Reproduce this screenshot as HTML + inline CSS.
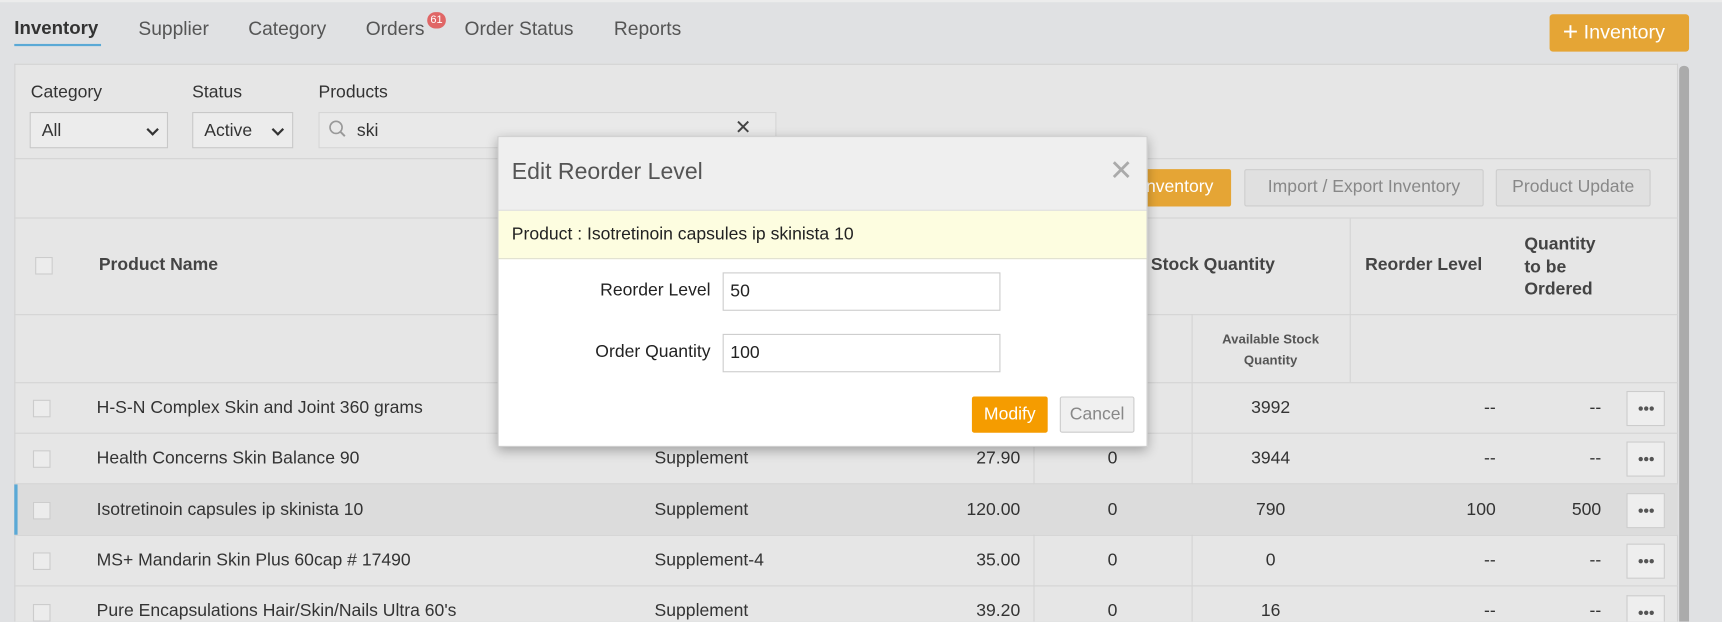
<!DOCTYPE html>
<html><head><meta charset="utf-8"><style>
*{box-sizing:border-box;margin:0;padding:0}
html,body{width:1722px;height:622px;overflow:hidden;background:#e0e1e3;font-family:"Liberation Sans",sans-serif;color:#333}
#w{position:absolute;left:0;top:0;width:1568px;height:566px;overflow:hidden;transform:scale(1.09821);transform-origin:0 0}
.a{position:absolute;white-space:nowrap}
.tab{font-size:17.5px;color:#555;top:16px}
.panel{position:absolute;left:13px;top:58px;width:1515px;height:508px;background:#e6e6e6;border:1px solid #d2d2d2;border-bottom:0}
.hl{position:absolute;height:1px;background:#d4d4d4;left:13px;width:1515px}
.vl{position:absolute;width:1px;background:#d4d4d4}
.sel{position:absolute;height:33px;border:1px solid #c8c8c8;background:#ececec;font-size:16px;padding:8px 10px;color:#333}
.arr:after{content:"";position:absolute;right:9px;top:11px;width:6px;height:6px;border-right:2px solid #333;border-bottom:2px solid #333;transform:rotate(45deg)}
.btn{position:absolute;height:34px;border:1px solid #cdcdcd;background:#e0e0e0;color:#888;font-size:16px;text-align:center;line-height:32px;border-radius:2px}
.cb{position:absolute;width:16px;height:16px;border:1px solid #ccc;background:#ececec}
.r{font-size:16px;color:#333}
.dots{position:absolute;left:1481px;width:35px;height:32px;border:1px solid #ccc;background:#eee}
.dots:before{content:"";position:absolute;left:10px;top:13px;width:4px;height:4px;border-radius:2px;background:#555;box-shadow:5px 0 0 #555,10px 0 0 #555}
.b{font-weight:bold;color:#444;font-size:16px}
</style></head><body><div id="w">
<div class="a" style="left:0;top:0;width:1568px;height:2px;background:#ececec"></div>
<div class="a tab" style="left:13px;color:#333;font-weight:bold;font-size:17px">Inventory</div>
<div class="a" style="left:13px;top:40px;width:79px;height:2px;background:#5aa9d6"></div>
<div class="a tab" style="left:126px">Supplier</div>
<div class="a tab" style="left:226px">Category</div>
<div class="a tab" style="left:333px">Orders</div>
<div class="a" style="left:389px;top:11px;width:17px;height:15px;border-radius:8px;background:#e06666;color:#fff;font-size:10px;text-align:center;line-height:15px">61</div>
<div class="a tab" style="left:423px">Order Status</div>
<div class="a tab" style="left:559px">Reports</div>
<div class="a" style="left:1411px;top:13px;width:127px;height:34px;background:#e5a535;border-radius:3px;color:#fff;font-size:18px;line-height:33px;padding-left:12px"><span style="font-size:24px;vertical-align:-2px">+</span> Inventory</div>

<div class="panel"></div>
<div class="a" style="left:1529px;top:60px;width:9px;height:506px;background:#ababab;border-radius:4px 4px 0 0"></div>
<div class="a r" style="left:28px;top:76px">Category</div>
<div class="a r" style="left:175px;top:76px">Status</div>
<div class="a r" style="left:290px;top:76px">Products</div>
<div class="sel arr" style="left:27px;top:102px;width:126px">All</div>
<div class="sel arr" style="left:175px;top:102px;width:92px">Active</div>
<div class="sel" style="left:290px;top:102px;width:417px;padding-left:34px;background:#e9e9e9;border-color:#d6d6d6">ski</div>
<svg class="a" style="left:299px;top:109px" width="18" height="18"><circle cx="7" cy="7" r="5.5" fill="none" stroke="#999" stroke-width="1.5"/><path d="M11 11l4 4" stroke="#999" stroke-width="1.8"/></svg>
<div class="a" style="left:669px;top:106px;font-size:18px;color:#444">✕</div>
<div class="hl" style="top:144px"></div>
<div class="btn" style="left:990px;top:154px;width:131px;background:#e5a535;border-color:#e5a535;color:#fff">Add Inventory</div>
<div class="btn" style="left:1133px;top:154px;width:218px">Import / Export Inventory</div>
<div class="btn" style="left:1362px;top:154px;width:141px">Product Update</div>
<div class="hl" style="top:198px"></div>
<div class="cb" style="left:32px;top:234px"></div>
<div class="a b" style="left:90px;top:233px">Product Name</div>
<div class="a b" style="left:1048px;top:233px">Stock Quantity</div>
<div class="vl" style="left:1229px;top:198px;height:150px"></div>
<div class="a b" style="left:1243px;top:233px">Reorder Level</div>
<div class="a b" style="left:1388px;top:213px;line-height:20.5px">Quantity<br>to be<br>Ordered</div>
<div class="hl" style="top:286px"></div>
<div class="vl" style="left:941px;top:286px;height:280px"></div>
<div class="vl" style="left:1085px;top:286px;height:280px"></div>
<div class="a" style="left:1085px;top:300px;width:144px;text-align:center;font-size:12px;font-weight:bold;color:#555;line-height:19px;white-space:normal">Available Stock<br>Quantity</div>
<div class="a" style="left:1030px;top:300px;font-size:12px;font-weight:bold;color:#555">be</div>
<div class="hl" style="top:348px"></div>
<div class="hl" style="top:394px"></div>
<div class="a" style="left:14px;top:441px;width:1514px;height:46px;background:#dcdcdc"></div>
<div class="a" style="left:13px;top:441px;width:3px;height:46px;background:#5aa9d6"></div>
<div class="hl" style="top:440px"></div>
<div class="hl" style="top:487px"></div>
<div class="hl" style="top:533px"></div>

<div class="cb" style="left:30px;top:364px"></div><div class="a r" style="left:88px;top:363px">H-S-N Complex Skin and Joint 360 grams</div>
<div class="a r" style="left:1120px;top:363px;width:74px;text-align:center">3992</div><div class="a r" style="left:1300px;top:363px;width:62px;text-align:right">--</div><div class="a r" style="left:1400px;top:363px;width:58px;text-align:right">--</div><div class="dots" style="top:356px"></div>

<div class="cb" style="left:30px;top:410px"></div><div class="a r" style="left:88px;top:409px">Health Concerns Skin Balance 90</div><div class="a r" style="left:596px;top:409px">Supplement</div><div class="a r" style="left:829px;top:409px;width:100px;text-align:right">27.90</div><div class="a r" style="left:983px;top:409px;width:60px;text-align:center">0</div>
<div class="a r" style="left:1120px;top:409px;width:74px;text-align:center">3944</div><div class="a r" style="left:1300px;top:409px;width:62px;text-align:right">--</div><div class="a r" style="left:1400px;top:409px;width:58px;text-align:right">--</div><div class="dots" style="top:402px"></div>

<div class="cb" style="left:30px;top:457px"></div><div class="a r" style="left:88px;top:456px">Isotretinoin capsules ip skinista 10</div><div class="a r" style="left:596px;top:456px">Supplement</div><div class="a r" style="left:829px;top:456px;width:100px;text-align:right">120.00</div><div class="a r" style="left:983px;top:456px;width:60px;text-align:center">0</div>
<div class="a r" style="left:1120px;top:456px;width:74px;text-align:center">790</div><div class="a r" style="left:1300px;top:456px;width:62px;text-align:right">100</div><div class="a r" style="left:1400px;top:456px;width:58px;text-align:right">500</div><div class="dots" style="top:449px"></div>

<div class="cb" style="left:30px;top:503px"></div><div class="a r" style="left:88px;top:502px">MS+ Mandarin Skin Plus 60cap # 17490</div><div class="a r" style="left:596px;top:502px">Supplement-4</div><div class="a r" style="left:829px;top:502px;width:100px;text-align:right">35.00</div><div class="a r" style="left:983px;top:502px;width:60px;text-align:center">0</div>
<div class="a r" style="left:1120px;top:502px;width:74px;text-align:center">0</div><div class="a r" style="left:1300px;top:502px;width:62px;text-align:right">--</div><div class="a r" style="left:1400px;top:502px;width:58px;text-align:right">--</div><div class="dots" style="top:495px"></div>

<div class="cb" style="left:30px;top:550px"></div><div class="a r" style="left:88px;top:548px">Pure Encapsulations Hair/Skin/Nails Ultra 60's</div><div class="a r" style="left:596px;top:548px">Supplement</div><div class="a r" style="left:829px;top:548px;width:100px;text-align:right">39.20</div><div class="a r" style="left:983px;top:548px;width:60px;text-align:center">0</div>
<div class="a r" style="left:1120px;top:548px;width:74px;text-align:center">16</div><div class="a r" style="left:1300px;top:548px;width:62px;text-align:right">--</div><div class="a r" style="left:1400px;top:548px;width:58px;text-align:right">--</div><div class="dots" style="top:542px;height:24px;border-bottom:0"></div>

<div class="a" style="left:453px;top:124px;width:592px;height:283px;background:#fff;box-shadow:0 3px 10px rgba(0,0,0,.3);border:1px solid #ccc"></div>
<div class="a" style="left:454px;top:125px;width:590px;height:67px;background:#efefef;border-bottom:1px solid #ddd"></div>
<div class="a" style="left:466px;top:145px;font-size:21px;color:#555">Edit Reorder Level</div>
<div class="a" style="left:1010px;top:140px;font-size:26px;color:#aaa">✕</div>
<div class="a" style="left:454px;top:192px;width:590px;height:44px;background:#fdfde0;border-bottom:1px solid #e0e0d0"></div>
<div class="a" style="left:466px;top:205px;font-size:16px;color:#222">Product : Isotretinoin capsules ip skinista 10</div>
<div class="a" style="left:480px;top:256px;width:167px;text-align:right;font-size:16px;color:#222">Reorder Level</div>
<div class="a" style="left:658px;top:248px;width:253px;height:35px;border:1px solid #ccc;font-size:16px;padding:8px 6px;color:#222">50</div>
<div class="a" style="left:480px;top:312px;width:167px;text-align:right;font-size:16px;color:#222">Order Quantity</div>
<div class="a" style="left:658px;top:304px;width:253px;height:35px;border:1px solid #ccc;font-size:16px;padding:8px 6px;color:#222">100</div>
<div class="a" style="left:885px;top:361px;width:69px;height:33px;background:#f59c00;border-radius:2px;color:#fff;font-size:16px;text-align:center;line-height:33px">Modify</div>
<div class="a" style="left:965px;top:361px;width:68px;height:33px;background:#f0f0f0;border:1px solid #ccc;border-radius:2px;color:#888;font-size:16px;text-align:center;line-height:31px">Cancel</div>
</div></body></html>
